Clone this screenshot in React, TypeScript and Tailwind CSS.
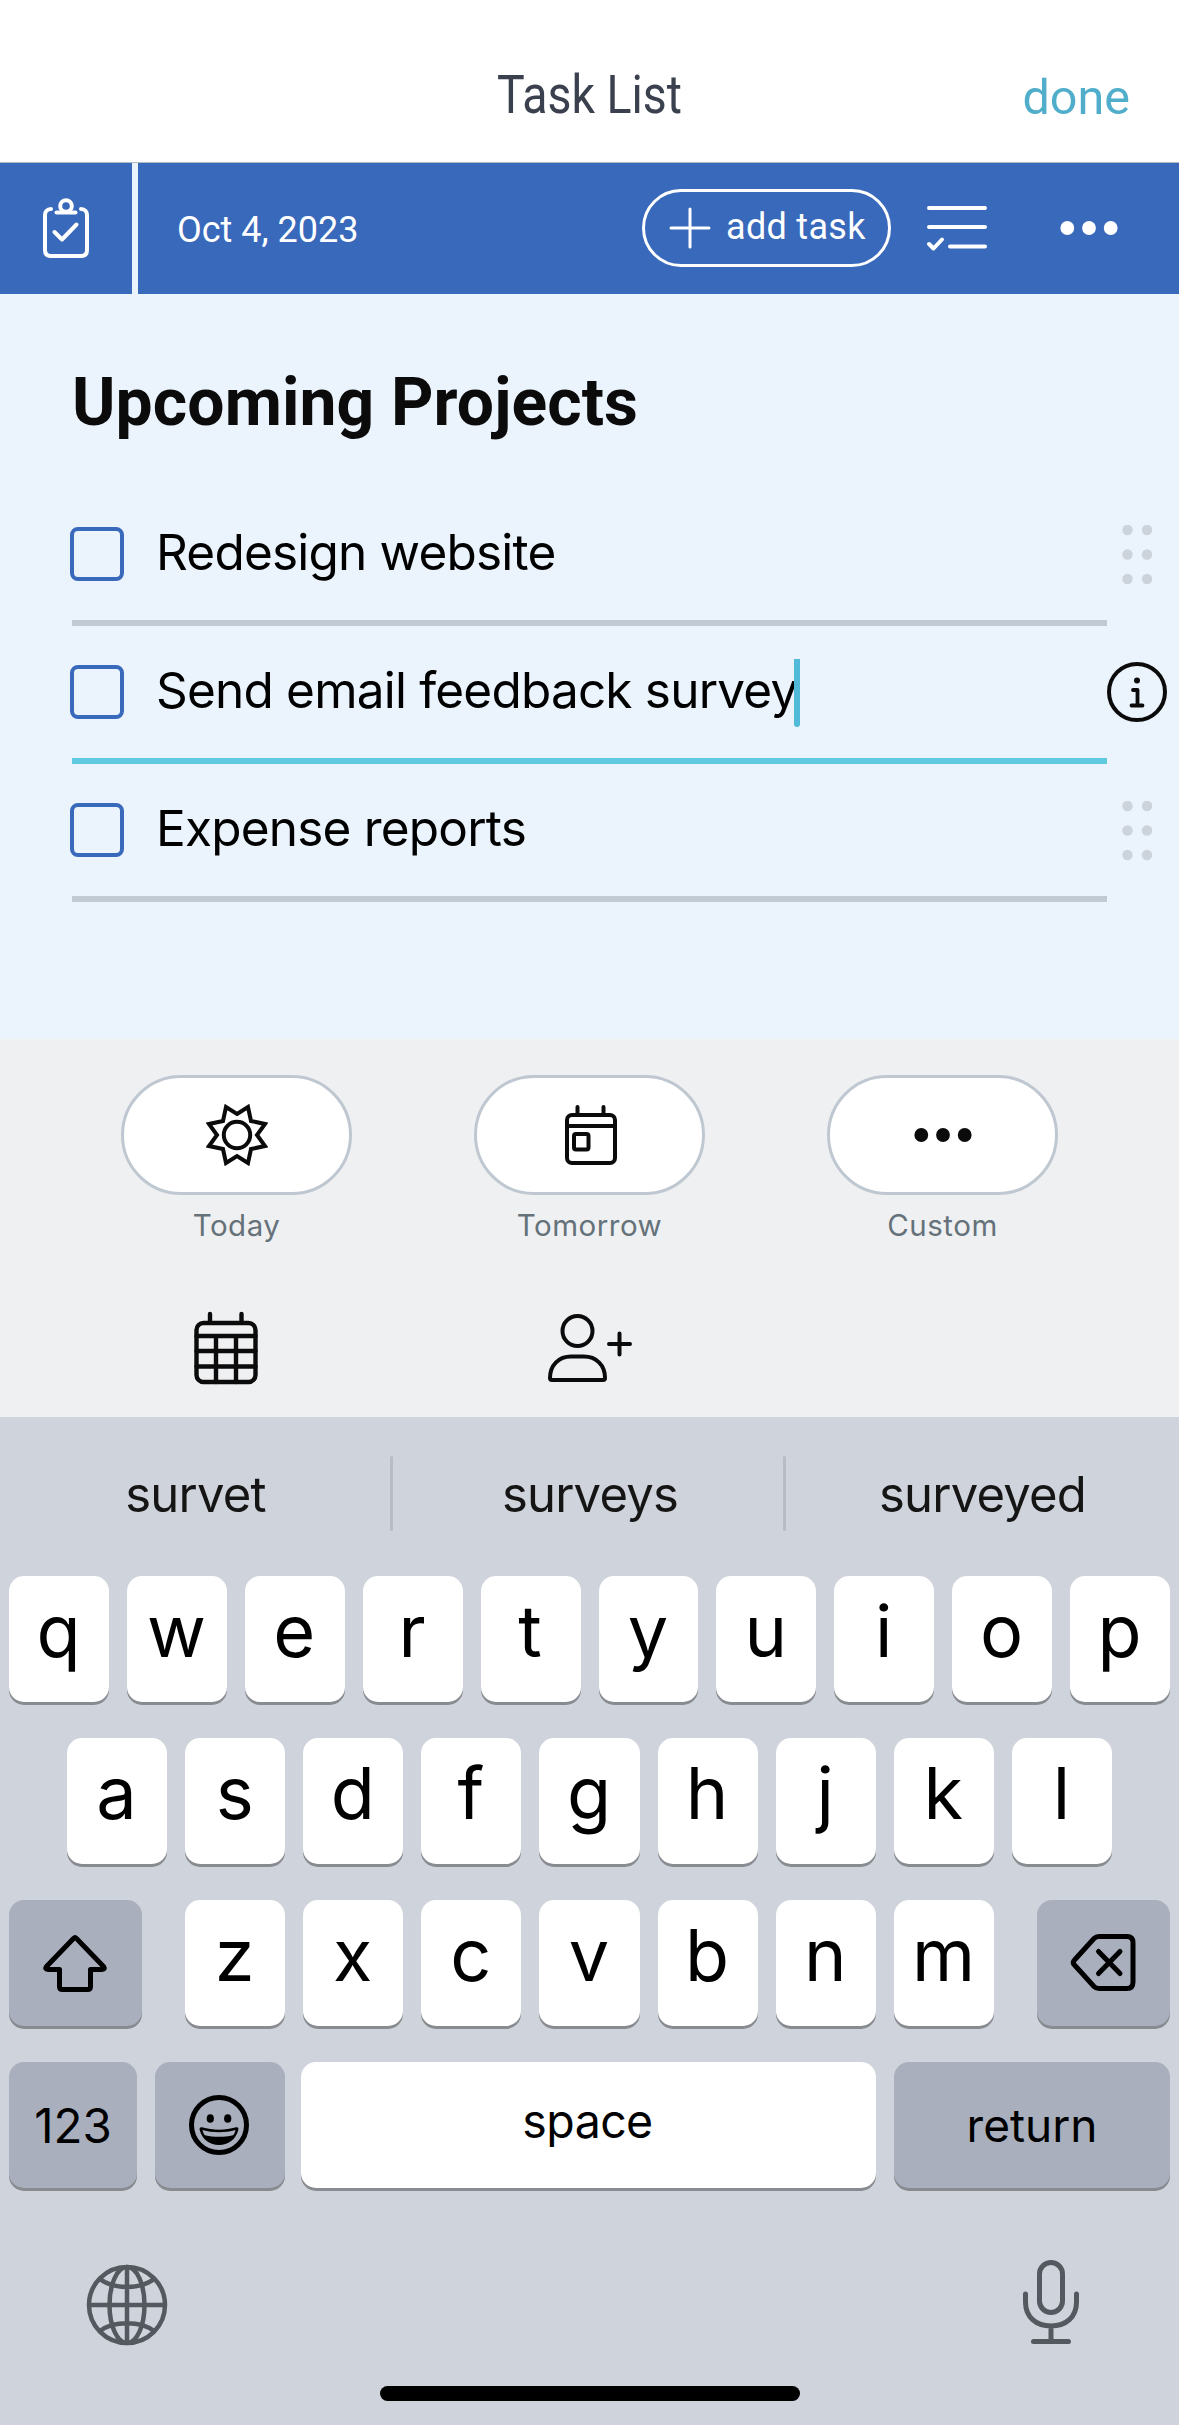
import * as React from 'react';

// Types
interface Task {
  title: string;
  active?: boolean;
}

interface KeyProps {
  children: React.ReactNode;
  className: string;
}

interface IconProps {
  viewBox: string;
  className: string;
  stroke?: number;
  children: React.ReactNode;
}

// Data
const TASKS: Task[] = [
  { title: 'Redesign website' },
  { title: 'Send email feedback survey', active: true },
  { title: 'Expense reports' },
];

const ROW_1 = ['q', 'w', 'e', 'r', 't', 'y', 'u', 'i', 'o', 'p'];
const ROW_2 = ['a', 's', 'd', 'f', 'g', 'h', 'j', 'k', 'l'];
const ROW_3 = ['z', 'x', 'c', 'v', 'b', 'n', 'm'];

// Shared outline icon wrapper
function Icon({ viewBox, className, stroke = 4, children }: IconProps) {
  return (
    <svg
      viewBox={viewBox}
      className={className}
      fill="none"
      stroke="currentColor"
      strokeWidth={stroke}
      strokeLinecap="round"
      strokeLinejoin="round"
      aria-hidden="true"
    >
      {children}
    </svg>
  );
}

function ClipboardIcon() {
  return (
    <Icon viewBox="0 0 48 62" className="h-[62px] w-12">
      <path d="M9 11C5 11 3 14 3 17V52C3 56 5 58 9 58H39C43 58 45 56 45 52V17C45 14 43 11 39 11" />
      <path d="M14.5 14.5H33.5" />
      <circle cx="24" cy="8" r="5.8" />
      <path d="M12.5 34L20 41.5L34.5 26.5" />
    </Icon>
  );
}

function Dots({ className }: { className: string }) {
  return (
    <svg viewBox="0 0 58 16" className={className} fill="currentColor" aria-hidden="true">
      <circle cx="7.3" cy="8" r="6.9" />
      <circle cx="29" cy="8" r="6.9" />
      <circle cx="50.7" cy="8" r="6.9" />
    </svg>
  );
}

// Header + toolbar
function Header() {
  return (
    <header className="grid h-[163px] grid-cols-[1fr_auto_1fr] border-b border-[#b4bac2] bg-white font-[Roboto,sans-serif]">
      <span />
      <h1 className="w-[185px] origin-left scale-x-[0.86] pt-[68px] text-[54px] leading-none font-[450] whitespace-nowrap text-[#3a404d]">
        Task List
      </h1>
      <button type="button" className="mr-[49px] justify-self-end self-start pt-[74px] text-[48.5px] leading-none text-[#50aecb]">
        done
      </button>
    </header>
  );
}

function Toolbar() {
  return (
    <div className="flex h-[131px] gap-1.5 font-[Roboto,sans-serif] text-white">
      <div className="flex w-[132px] items-center justify-center bg-[#3869bb]">
        <ClipboardIcon />
      </div>
      <div className="flex flex-1 items-start bg-[#3869bb] pl-[39px]">
        <span className="mt-[49px] w-[465px] text-[36px] leading-none">Oct 4, 2023</span>
        <button type="button" className="mt-[26px] flex h-[78px] w-[249px] rounded-full border-3 border-white pl-6">
          <Icon viewBox="0 0 42 42" stroke={3} className="mt-[15px] h-[42px] w-[42px]">
            <path d="M21 2V40M2 21H40" />
          </Icon>
          <span className="mt-[17px] ml-[15px] text-[36px] leading-none tracking-[0.3px]">add task</span>
        </button>
        <Icon viewBox="0 0 64 50" className="mt-[40px] ml-[34px] h-[50px] w-16">
          <path d="M4 5H60M4 24H60M25 43.5H60" />
          <path d="M4 41L8.5 45.5L17 36.5" />
        </Icon>
        <Dots className="mt-[57px] ml-[71px] h-4 w-[58px]" />
      </div>
    </div>
  );
}

// Task list
function DragHandle() {
  return (
    <svg viewBox="0 0 30 60" className="mt-px ml-[15px] h-[60px] w-[30px]" fill="#ccd3da" aria-hidden="true">
      {[5, 29.5, 54].map((y) => (
        <React.Fragment key={y}>
          <circle cx="5.5" cy={y} r="5.2" />
          <circle cx="25" cy={y} r="5.2" />
        </React.Fragment>
      ))}
    </svg>
  );
}

function InfoIcon() {
  return (
    <Icon viewBox="0 0 60 60" className="h-[60px] w-[60px] text-[#0b0b0b]">
      <circle cx="30" cy="30" r="28" />
      <circle cx="30" cy="18.5" r="3" fill="currentColor" stroke="none" />
      <path d="M26 28H30.5V43.5M24.5 43.5H35.5" strokeWidth="3.8" />
    </Icon>
  );
}

function TaskRow({ task }: { task: Task }) {
  return (
    <li className="flex h-[138px]">
      <div
        className={
          task.active
            ? 'ml-[72px] flex w-[1035px] border-b-6 border-[#5fc9e0]'
            : 'ml-[72px] flex w-[1035px] border-b-6 border-[#c1c9d2]'
        }
      >
        <span className="mt-[39px] -ml-0.5 h-[54px] w-[54px] rounded-[8px] border-4 border-[#3869bb]" />
        <span className="mt-[40px] ml-8 text-[49.5px] leading-none tracking-[-0.8px] whitespace-nowrap text-black">
          {task.title}
        </span>
        {task.active ? <span className="mt-[33px] -ml-[3px] h-[68px] w-1.5 rounded-b-full bg-[#50bad8]" /> : null}
      </div>
      <div className="flex h-[132px] items-center">{task.active ? <InfoIcon /> : <DragHandle />}</div>
    </li>
  );
}

function TaskList() {
  return (
    <main className="h-[745px] pt-[76px]">
      <h2 className="ml-[72px] font-[Roboto,sans-serif] text-[66px] leading-none font-bold tracking-[0.1px] text-[#0b0b0b]">
        Upcoming Projects
      </h2>
      <ul className="mt-[52px]">
        {TASKS.map((task) => (
          <TaskRow key={task.title} task={task} />
        ))}
      </ul>
    </main>
  );
}

// Due date shortcuts
function Shortcut({ label, children }: { label: string; children: React.ReactNode }) {
  return (
    <div className="flex w-[231px] flex-col items-center">
      <button
        type="button"
        className="flex h-[120px] w-full items-center justify-center rounded-full border-3 border-[#bfc8d1] bg-white text-[#0b0b0b]"
      >
        {children}
      </button>
      <span className="mt-[16px] text-[29.5px] leading-none tracking-[0.5px] text-[#65727a]">{label}</span>
    </div>
  );
}

function QuickActions() {
  return (
    <section className="h-[378px] bg-[#eff0f2] pt-9">
      <div className="flex gap-[122px] pl-[121px]">
        <Shortcut label="Today">
          <Icon viewBox="-31 -31 62 62" className="h-[62px] w-[62px]">
            <path
              strokeLinejoin="miter"
              d="M0-21L11-28L14-14L28-11L20 0L28 11L14 14L11 28L0 21L-11 28L-14 14L-28 11L-20 0L-28-11L-14-14L-11-28Z"
            />
            <circle r="13.2" />
          </Icon>
        </Shortcut>
        <Shortcut label="Tomorrow">
          <Icon viewBox="0 0 56 62" className="ml-[3px] h-[62px] w-14">
            <rect x="4" y="11" width="48" height="48" rx="5" />
            <path d="M4 22H52M14.5 3V10M40.5 3V10" />
            <rect x="11" y="30" width="14.5" height="15.5" rx="2" />
          </Icon>
        </Shortcut>
        <Shortcut label="Custom">
          <Dots className="h-4 w-[58px]" />
        </Shortcut>
      </div>
      <div className="mt-[70px] flex items-start pl-[193px] text-[#0b0b0b]">
        <Icon viewBox="0 0 66 76" stroke={4.4} className="h-[76px] w-[66px]">
          <rect x="3.5" y="12" width="59" height="59" rx="7" />
          <path d="M3.5 25H62.5M3.5 40H62.5M3.5 55.5H62.5M23 25V71M43 25V71M17 3V11M48.5 3V11" />
        </Icon>
        <Icon viewBox="0 0 88 72" className="mt-[2px] ml-[287px] h-[72px] w-[88px]">
          <circle cx="31.5" cy="18" r="15" />
          <path d="M25 43.5H38C50 43.5 59 52 59 65C59 66.5 58 67 57 67H6C5 67 4 66.5 4 65C4 52 13 43.5 25 43.5Z" />
          <path d="M73.5 20.5V41.5M63 31H84" />
        </Icon>
      </div>
    </section>
  );
}

// Keyboard
function Key({ children, className }: KeyProps) {
  return (
    <button
      type="button"
      className={`flex h-[126px] justify-center rounded-[15px] leading-none text-black shadow-[0_3px_0_#888b90] ${className}`}
    >
      {children}
    </button>
  );
}

function LetterKeys({ letters }: { letters: string[] }) {
  return (
    <>
      {letters.map((letter) => (
        <Key key={letter} className="flex-1 bg-white pt-[19px] pr-px text-[72px] font-[380]">
          {letter}
        </Key>
      ))}
    </>
  );
}

function Suggestions() {
  return (
    <div className="flex h-[159px] pt-[39px] text-[49px] leading-none tracking-[-0.8px] text-[#151515]">
      <span className="flex w-[390px] justify-center pt-[14px] pl-px">survet</span>
      <span className="h-[75px] w-[3px] rounded-full bg-[#b9bcc2]" />
      <span className="flex w-[390px] justify-center pt-[14px] pl-1">surveys</span>
      <span className="h-[75px] w-[3px] rounded-full bg-[#b9bcc2]" />
      <span className="flex flex-1 justify-center pt-[14px]">surveyed</span>
    </div>
  );
}

function EmojiIcon() {
  return (
    <Icon viewBox="-31 -31 62 62" stroke={5} className="h-[62px] w-[62px]">
      <circle r="27.5" />
      <ellipse cx="-8.7" cy="-6.5" rx="3.6" ry="4.3" fill="currentColor" stroke="none" />
      <ellipse cx="8.7" cy="-6.5" rx="3.6" ry="4.3" fill="currentColor" stroke="none" />
      <path
        fillRule="evenodd"
        fill="currentColor"
        stroke="none"
        d="M-17 2.3C-6 5.5 6 5.5 17 2.3C19 1.8 19.8 3 19.3 5C17 14.5 9 20 0 20C-9 20-17 14.5-19.3 5C-19.8 3-19 1.8-17 2.3ZM-16.5 5C-16 7.5-15 9.3-14 10.3C-5 12.3 5 12.3 14 10.3C15 9.3 16 7.5 16.5 5C6 8-6 8-16.5 5Z"
      />
    </Icon>
  );
}

function Keyboard() {
  return (
    <section className="flex h-[1008px] flex-col bg-[#cfd3db]">
      <Suggestions />
      <div className="flex flex-col gap-9 px-[9px]">
        <div className="flex gap-[18px]">
          <LetterKeys letters={ROW_1} />
        </div>
        <div className="flex gap-[18px] px-[58px]">
          <LetterKeys letters={ROW_2} />
        </div>
        <div className="flex gap-[43px]">
          <Key className="w-[133px] items-center bg-[#a9afbd] pr-[2px]">
            <Icon viewBox="0 0 68 60" stroke={5} className="h-[60px] w-[68px]">
              <path d="M32.5 5.5Q34 4 35.5 5.5L62.5 33.5Q64.5 36.5 61 36.5H49.5V53.5Q49.5 56.5 46.5 56.5H21.5Q18.5 56.5 18.5 53.5V36.5H7Q3.5 36.5 5.5 33.5Z" />
            </Icon>
          </Key>
          <div className="flex flex-1 gap-[18px]">
            <LetterKeys letters={ROW_3} />
          </div>
          <Key className="w-[133px] items-center bg-[#a9afbd] pr-[2px]">
            <Icon viewBox="0 0 68 58" stroke={5} className="h-[58px] w-[68px]">
              <path d="M30 2.500H58Q64 2.500 64 8.500V48Q64 54.500 58 54.500H30Q27 54.500 25 52.500L5.500 31Q3 28.500 5.500 26L25 4.500Q27 2.500 30 2.500Z" />
              <path d="M29.500 17.500L51 39.500M51 17.500L29.500 39.500" />
            </Icon>
          </Key>
        </div>
        <div className="flex">
          <Key className="w-32 bg-[#a9afbd] pt-[40px] text-[47.5px]">123</Key>
          <Key className="ml-[18px] w-[130px] items-center bg-[#a9afbd] pr-[2px]">
            <EmojiIcon />
          </Key>
          <Key className="ml-4 w-[575px] bg-white pt-[36px] pr-[2px] text-[46.5px] tracking-[-0.6px]">space</Key>
          <Key className="ml-[18px] flex-1 bg-[#a9afbd] pt-[40px] text-[46px]">return</Key>
        </div>
      </div>
      <div className="mt-[70px] flex justify-between pr-[98px] pl-[85px] text-[#54585f]">
        <Icon viewBox="-42 -42 84 84" stroke={4.5} className="mt-[5px] h-[84px] w-[84px]">
          <circle r="38" />
          <ellipse rx="17.5" ry="38" />
          <path strokeLinecap="butt" d="M0-38V38M-38 0H38M-27-26C-14-15.5 14-15.5 27-26M-27 26C-14 15.5 14 15.5 27 26" />
        </Icon>
        <Icon viewBox="0 0 60 88" stroke={5} className="h-[88px] w-[60px]">
          <rect x="18.5" y="4.5" width="23" height="50" rx="11.5" />
          <path d="M4.5 36V44C4.5 59 15 68 30 68C45 68 55.5 59 55.5 44V36M30 68V83.5M12.5 83.5H47.5" />
        </Icon>
      </div>
      <div className="mt-auto mb-6 ml-[380px] h-[15px] w-[420px] rounded-full bg-black" />
    </section>
  );
}

export default function App() {
  return (
    <div className="h-[2425px] w-[1179px] overflow-hidden bg-[#ebf3fd] font-[Inter,sans-serif]">
      <Header />
      <Toolbar />
      <TaskList />
      <QuickActions />
      <Keyboard />
    </div>
  );
}
